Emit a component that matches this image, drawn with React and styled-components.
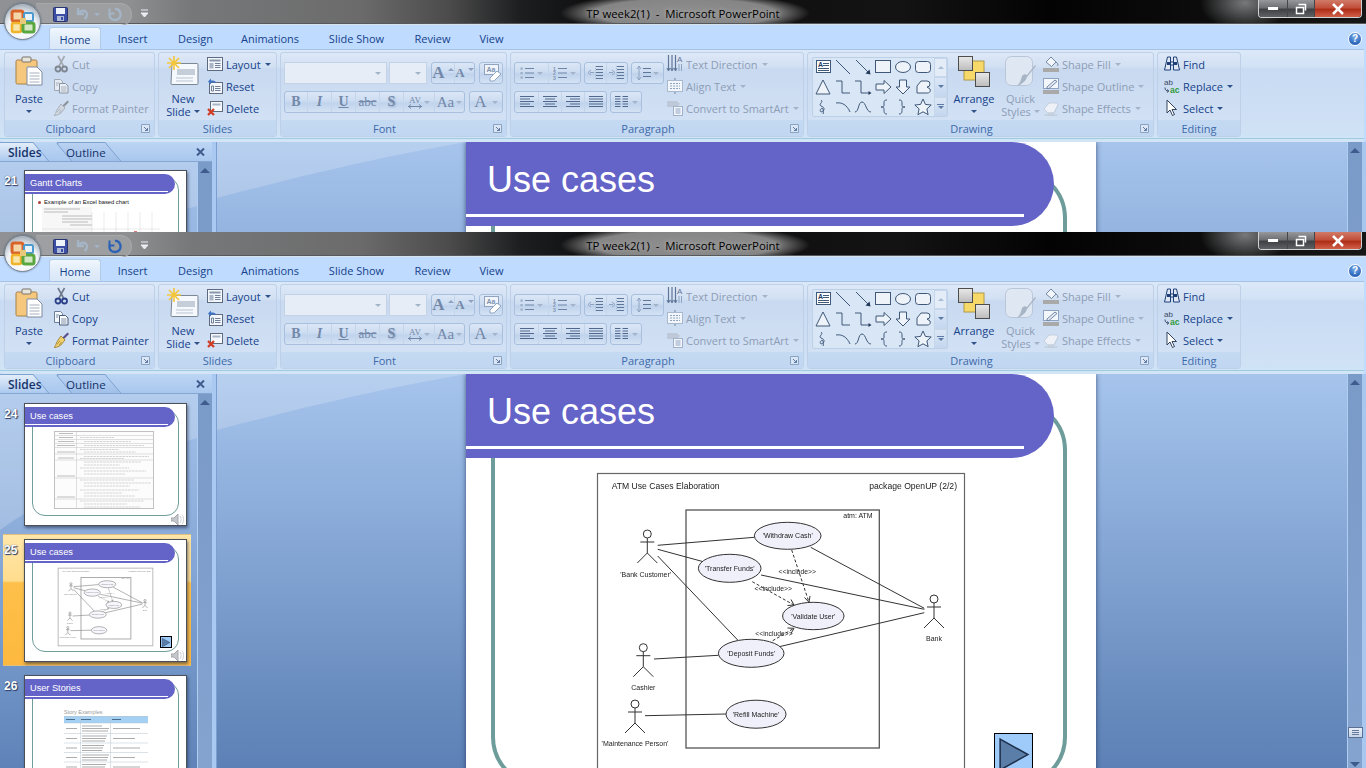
import React from 'react';
import styled, { createGlobalStyle } from 'styled-components';

const GlobalStyle = createGlobalStyle`
  * { box-sizing: border-box; }
  html, body {
    margin: 0;
    width: 1366px;
    height: 768px;
    overflow: hidden;
    background: #000;
    font-family: 'Open Sans', 'Liberation Sans', sans-serif;
    font-size: 11px;
  }
`;

const Screen = styled.div`
  display: flex;
  flex-direction: column;
  width: 1366px;
  height: 768px;
`;

const Clip = styled.div`
  height: ${(p) => p.$height}px;
  overflow: hidden;
  flex: none;
`;

const Win = styled.div`
  position: relative;
  display: flex;
  flex-direction: column;
  height: 536px;
  background: #bfdbff;
`;

// title bar
const TitleBar = styled.div`
  display: grid;
  grid-template-columns: 1fr auto 1fr;
  height: 25px;
  flex: none;
  border-bottom: 1px solid #d9e2ea;
  box-shadow: inset 0 -1px 0 #55585c;
  background:
    radial-gradient(ellipse 125px 20px at 685px 13px, #8f8f8f 0, #858585 72%, rgba(90, 90, 90, 0) 100%),
    radial-gradient(ellipse 45px 28px at 1245px 3px, #77797b 0, rgba(90, 90, 90, 0) 100%),
    linear-gradient(90deg, #8f9194 0, #8d8f91 130px, #77787a 190px, #6b6b6b 360px, #4b4b4b 450px, #1d1e20 520px, #0d0d0e 600px, #131313 900px, #030303 1050px, #161616 1366px);
`;

const QuickBar = styled.div`
  display: flex;
  align-items: center;
`;

const QuickPill = styled.div`
  display: flex;
  align-items: center;
  width: 96px;
  height: 23px;
  margin: 1px 0 0 36px;
  padding-left: 17px;
  border: 1px solid #a6a8aa;
  border-left: 0;
  border-radius: 0 12px 12px 0;
  background: rgba(255, 255, 255, 0.14);
`;

const QuickGap = styled.span`
  display: block;
  width: ${(p) => p.$w}px;
  flex: none;
`;

const TitleText = styled.div`
  padding: 0 10px;
  line-height: 27px;
  font-size: 11.4px;
  color: #000;
  white-space: pre;
  text-shadow: 0 0 5px rgba(255, 255, 255, 0.45);
`;

const WinControls = styled.div`
  display: flex;
  justify-self: end;
  height: 18px;
  margin-right: 4px;
  border: 1px solid #cfd3d6;
  border-top: 0;
  border-radius: 0 0 4px 4px;
  overflow: hidden;
`;

const WinButton = styled.div`
  display: flex;
  align-items: center;
  justify-content: center;
  width: ${(p) => p.$w}px;
  border-left: ${(p) => (p.$first ? 0 : '1px solid #44464a')};
  background: ${(p) => (p.$red
    ? 'linear-gradient(#cf7b68 0, #c2503a 45%, #ae2d17 55%, #d2604a 100%)'
    : 'linear-gradient(#96989c 0, #6d6f73 45%, #3f4145 55%, #5f6165 100%)')};
`;

const OfficeOrb = styled.div`
  position: absolute;
  left: 4px;
  top: 3px;
  width: 37px;
  height: 37px;
  display: flex;
  align-items: center;
  justify-content: center;
  border-radius: 50%;
  border: 1px solid #74808e;
  background: radial-gradient(circle at 50% 70%, #ffffff 0, #eef2f7 50%, #aab3bd 78%, #dfe4ea 100%);
  box-shadow: 0 0 2px rgba(60, 80, 100, 0.7);
  z-index: 3;
`;

// tab strip
const TabStrip = styled.div`
  display: flex;
  align-items: flex-end;
  height: 25px;
  flex: none;
  padding-left: 49px;
  background: #bfdbff;
`;

const RibbonTab = styled.div`
  width: ${(p) => p.$w}px;
  height: 23px;
  line-height: 24px;
  text-align: center;
  color: #15428b;
  font-size: 11px;
  ${(p) => p.$active && `
    background: linear-gradient(#f0f6fd 0, #e0ecfa 55%, #d9e7f8 100%);
    border: 1px solid #b2cbe6;
    border-bottom: 0;
    border-radius: 3px 3px 0 0;
  `}
`;

const HelpDot = styled.div`
  width: 14px;
  height: 14px;
  margin: 0 4px 4px auto;
  border-radius: 50%;
  border: 1px solid #fff;
  background: radial-gradient(circle at 50% 30%, #7fb0ea, #1f5cb4 80%);
  color: #fff;
  font: bold 10px/12px 'Liberation Sans', sans-serif;
  text-align: center;
`;

// ribbon
const Ribbon = styled.div`
  display: flex;
  gap: 3px;
  height: 93px;
  flex: none;
  padding: 2px 4px 0;
  margin-right: 2px;
  border-top: 1px solid #a6c3e5;
  margin-top: -1px;
  border-bottom: 3px solid #d1e5f7;
  box-shadow: inset 0 -1px 0 #9fcbe0;
  border-radius: 0 0 3px 3px;
  background: linear-gradient(#dbe8f8 0, #d3e3f6 18%, #c8dbf3 22%, #cfe0f5 80%, #cfe4f6 100%);
`;

const GroupBox = styled.div`
  display: flex;
  flex-direction: column;
  width: ${(p) => p.$w}px;
  height: 85px;
  flex: none;
  border: 1px solid #bdd0e8;
  border-radius: 3px;
  overflow: hidden;
  background: linear-gradient(#dde8f7 0, #d2e0f3 14px, #c8d9f0 16px, #d5e3f5 100%);
`;

const GroupBody = styled.div`
  display: flex;
  flex: 1;
  gap: ${(p) => p.$gap ?? 3}px;
  padding-left: ${(p) => p.$left ?? 3}px;
`;

const GroupFoot = styled.div`
  position: relative;
  height: 16px;
  flex: none;
  padding-right: ${(p) => (p.$launcher ? 18 : 0)}px;
  text-align: center;
  line-height: 17px;
  color: #3e6aaa;
  background: linear-gradient(#c4d9f2, #c1d7f1);
`;

const Launcher = styled.svg`
  position: absolute;
  right: 4px;
  top: 4px;
`;

const LargeBtn = styled.div`
  display: flex;
  flex-direction: column;
  align-items: center;
  width: ${(p) => p.$w}px;
  flex: none;
  color: ${(p) => (p.$off ? '#8d9db6' : '#15428b')};
  line-height: 13px;
  text-align: center;
`;

const LargeIconSlot = styled.div`
  display: flex;
  justify-content: center;
  height: 39px;
  padding-top: 3px;
  flex: none;
`;

const Caret = styled.span`
  display: inline-block;
  flex: none;
  width: 0;
  height: 0;
  border-left: 3px solid transparent;
  border-right: 3px solid transparent;
  border-top: 3px solid ${(p) => (p.$off ? '#a3b3ca' : '#30528a')};
  margin-left: ${(p) => p.$left ?? 1}px;
  vertical-align: middle;
`;

const CaretLine = styled.div`
  display: flex;
  justify-content: center;
  height: 13px;
  align-items: center;
`;

const SmallList = styled.div`
  display: flex;
  flex-direction: column;
  flex: none;
`;

const SmallRow = styled.div`
  display: flex;
  align-items: center;
  gap: 3px;
  height: 22px;
  white-space: nowrap;
  color: ${(p) => (p.$off ? '#8d9db6' : '#15428b')};
`;

const StackRows = styled.div`
  display: flex;
  flex-direction: column;
  gap: 7px;
  padding-top: 9px;
  flex: none;
`;

const Row = styled.div`
  display: flex;
  gap: ${(p) => p.$gap ?? 4}px;
`;

const Combo = styled.div`
  display: flex;
  align-items: center;
  justify-content: flex-end;
  width: ${(p) => p.$w}px;
  height: 22px;
  padding-right: 5px;
  border: 1px solid #c2d3e8;
  background: #e6edf6;
`;

const Seg = styled.div`
  display: flex;
  height: 22px;
  border: 1px solid #a8c0de;
  border-radius: 3px;
  overflow: hidden;
  background: linear-gradient(#dbe7f6 0, #cddcf1 45%, #bfd3ec 55%, #d4e2f4 100%);
`;

const SegBtn = styled.div`
  display: flex;
  align-items: center;
  justify-content: center;
  gap: 2px;
  width: ${(p) => p.$w}px;
  flex: none;
  border-left: ${(p) => (p.$first ? 0 : '1px solid #c3d5ea')};
  color: #7388a8;
  font: ${(p) => (p.$plain ? 'normal' : 'bold')} ${(p) => p.$size ?? 14}px 'Liberation Serif', serif;
  ${(p) => p.$italic && 'font-style: italic;'}
  ${(p) => p.$under && 'text-decoration: underline;'}
  ${(p) => p.$strike && 'text-decoration: line-through;'}
  ${(p) => p.$shadow && 'text-shadow: 1px 1px 2px #8ea3c1;'}
`;

const KerningStack = styled.span`
  display: flex;
  flex-direction: column;
  align-items: center;
  font: 9px/8px 'Liberation Serif', serif;
`;

const SuperCaret = styled.span`
  display: block;
  width: 0;
  height: 0;
  margin: -8px 0 0 1px;
  border-left: 3px solid transparent;
  border-right: 3px solid transparent;
  ${(p) => (p.$down ? 'border-top: 3px solid #8ea3c1;' : 'border-bottom: 3px solid #8ea3c1;')}
`;

const Gallery = styled.div`
  display: flex;
  width: 136px;
  height: 60px;
  margin: 4px 0 0 0;
  border: 1px solid #bcd0e8;
  border-radius: 2px;
  background: #d9e6f6;
  flex: none;
`;

const ShapeGrid = styled.div`
  display: grid;
  grid-template-columns: repeat(6, 20px);
  grid-auto-rows: 20px;
  margin-top: -1px;
`;

const GalleryScroll = styled.div`
  display: flex;
  flex-direction: column;
  width: 14px;
  margin-left: 1px;
`;

const GalleryBtn = styled.div`
  flex: 1;
  display: flex;
  flex-direction: column;
  align-items: center;
  justify-content: center;
  gap: 1px;
  border: 1px solid #c6d7ec;
  background: ${(p) => (p.$light ? '#e3ecf7' : 'linear-gradient(#dbe7f6, #c4d7ef)')};
`;

const GalleryMark = styled.span`
  display: block;
  width: 7px;
  height: 1px;
  background: #5d7ba6;
`;

const Tri = styled.span`
  display: block;
  width: 0;
  height: 0;
  border-left: 3px solid transparent;
  border-right: 3px solid transparent;
  ${(p) => (p.$up ? `border-bottom: 3px solid ${p.$c ?? '#5d7ba6'};` : `border-top: 3px solid ${p.$c ?? '#5d7ba6'};`)}
`;

const RibbonFill = styled.div`
  flex: 1;
`;

// work area
const Work = styled.div`
  display: flex;
  flex: 1;
  min-height: 0;
`;

const Panel = styled.div`
  display: flex;
  flex-direction: column;
  width: 212px;
  flex: none;
  background: linear-gradient(#a5c4ec 0, #93b3df 30%, #7c9fd0 60%, #5f83b8 100%);
`;

const PanelTabs = styled.div`
  position: relative;
  display: flex;
  height: 20px;
  flex: none;
  overflow: hidden;
  border-bottom: 1px solid #86a6d2;
  background: linear-gradient(#bcd5f4, #a9c7ee);
`;

const PaneTab = styled.div`
  position: relative;
  width: ${(p) => p.$w}px;
  margin-left: ${(p) => p.$left}px;
  padding-left: ${(p) => p.$pad}px;
  line-height: 21px;
  font-size: ${(p) => (p.$active ? 12 : 11.6)}px;
  font-weight: ${(p) => (p.$active ? 600 : 400)};
  color: #15326a;
  z-index: ${(p) => (p.$active ? 2 : 1)};
  &::before {
    content: '';
    position: absolute;
    inset: 0 8px -2px ${(p) => (p.$active ? -12 : 6)}px;
    transform: skewX(40deg);
    border: 1px solid #7ea1d0;
    border-radius: 3px 0 0 0;
    background: ${(p) => (p.$active
    ? 'linear-gradient(#e2edfa 0, #c7dbf5 50%, #a8c7ee 100%)'
    : 'linear-gradient(#b9d2f2 0, #9fbfe9 100%)')};
    z-index: -1;
  }
`;

const PaneClose = styled.svg`
  position: absolute;
  right: 7px;
  top: 6px;
`;

const PanelBody = styled.div`
  display: flex;
  flex: 1;
  min-height: 0;
  position: relative;
  overflow: hidden;
`;

const Swoosh = styled.div`
  position: absolute;
  inset: 0;
  background: rgba(255, 255, 255, 0.2);
  clip-path: path('${(p) => p.$d}');
  pointer-events: none;
`;

const ThumbList = styled.div`
  position: relative;
  flex: 1;
  display: flex;
  flex-direction: column;
  gap: 4px;
  padding: ${(p) => p.$top}px 0 0 3px;
  min-width: 0;
`;

const ThumbRow = styled.div`
  display: flex;
  width: 188px;
  height: 132px;
  flex: none;
  padding-top: ${(p) => (p.$active ? 4 : 5)}px;
  ${(p) => p.$active && `
    border: 1px solid #e3bf7e;
    border-width: 1px 0 1px 0;
    background: linear-gradient(#ffe6a9 0, #ffdd8e 35%, #fec04a 37%, #fdb93f 100%);
  `}
`;

const ThumbNum = styled.div`
  width: 21px;
  flex: none;
  padding: 4px 0 0 1px;
  font: bold 12px/14px 'Liberation Sans', sans-serif;
  color: #fff;
  text-shadow: 1px 1px 1px #2a3d66, 0 0 1px #2a3d66;
`;

const Thumb = styled.div`
  position: relative;
  width: 163px;
  height: 123px;
  flex: none;
  padding-top: 3px;
  border: 1px solid #4b4f58;
  background: #fff;
  box-shadow: 1px 2px 3px rgba(30, 40, 70, 0.6);
`;

const ThumbFrame = styled.div`
  position: absolute;
  left: 7px;
  top: 6px;
  width: 147px;
  height: 106px;
  border: 1px solid #6e9c9a;
  border-radius: 13px;
`;

const ThumbHeader = styled.div`
  position: relative;
  width: 150px;
  height: 20px;
  padding-left: 5px;
  border-radius: 0 10px 10px 0;
  background: #6464c8;
  font: 9.2px/19px 'Liberation Sans', sans-serif;
  color: #fff;
  &::after {
    content: '';
    position: absolute;
    left: 0;
    right: 7px;
    top: 17px;
    height: 1px;
    background: #fff;
  }
`;

const ThumbContent = styled.div`
  position: relative;
  padding: ${(p) => p.$top}px 0 0 ${(p) => p.$left}px;
`;

const ThumbHeading = styled.div`
  display: flex;
  align-items: center;
  gap: 3px;
  font: ${(p) => p.$size ?? 5.5}px/7px 'Liberation Sans', sans-serif;
  color: ${(p) => p.$c ?? '#9a9a9a'};
  white-space: nowrap;
`;

const BulletDot = styled.span`
  display: block;
  width: 3px;
  height: 3px;
  border-radius: 50%;
  background: #b04040;
`;

const SheetIndent = styled.div`
  margin: 1px 0 0 4px;
`;

const Speaker = styled.svg`
  position: absolute;
  left: 146px;
  top: 109px;
`;

const VScroll = styled.div`
  display: flex;
  flex-direction: column;
  align-items: center;
  width: ${(p) => p.$w}px;
  flex: none;
  padding: 6px 0 1px;
  border-left: 1px solid #b0cdf2;
  background: linear-gradient(#7a9ac7, #85a3cf);
  position: relative;
`;

const ScrollArrow = styled.span`
  display: block;
  width: 0;
  height: 0;
  border-left: 5px solid transparent;
  border-right: 5px solid transparent;
  ${(p) => (p.$up
    ? 'border-bottom: 5px solid #3f5a8c;'
    : 'border-top: 5px solid #3f5a8c; margin-top: 24px;')}
`;

const ScrollThumb = styled.div`
  display: flex;
  flex-direction: column;
  justify-content: center;
  gap: 1px;
  width: 15px;
  height: 11px;
  margin-top: auto;
  padding: 0 3px;
  border: 1px solid #5a6f92;
  background: linear-gradient(#e9f0f9, #c5d4e8);
`;

const ThumbGrip = styled.span`
  display: block;
  height: 1px;
  background: #67799a;
`;

const Splitter = styled.div`
  width: 5px;
  flex: none;
  border-right: 1px solid #7c9fd0;
  background: #a9c9f2;
`;

const Edge = styled.div`
  width: 4px;
  flex: none;
  background: #a7c7ef;
`;

const Stage = styled.div`
  position: relative;
  display: flex;
  justify-content: center;
  flex: 1;
  overflow: hidden;
  padding-right: 2px;
  background: linear-gradient(#a6c4ec 0, #93b3df 25%, #7d9fcf 55%, #6a8dbf 80%, #5d81b6 100%);
`;

const Slide = styled.div`
  position: relative;
  width: 630px;
  height: 472px;
  flex: none;
  padding-top: 0;
  background: #fff;
  box-shadow: 0 0 5px rgba(30, 50, 90, 0.75);
`;

const SlideFrame = styled.div`
  position: absolute;
  left: 25px;
  top: 26px;
  width: 576px;
  height: 387px;
  border: 4px solid #6e9c9a;
  border-radius: 50px;
`;

const SlideHeader = styled.div`
  position: relative;
  width: 588px;
  height: 84px;
  padding-left: 21px;
  border-radius: 0 42px 42px 0;
  background: #6464c8;
  color: #fff;
  font: 36px/76px 'Liberation Sans', sans-serif;
  &::after {
    content: '';
    position: absolute;
    left: 0;
    top: 72px;
    width: 558px;
    height: 3px;
    background: #fff;
  }
`;

const Figure = styled.div`
  position: relative;
  margin: 15px 0 0 131px;
  width: 368px;
`;

const ActionBtn = styled.div`
  position: absolute;
  left: ${(p) => p.$x}px;
  top: ${(p) => p.$y}px;
  width: ${(p) => p.$s}px;
  height: ${(p) => p.$s}px;
  border: ${(p) => (p.$s > 20 ? 1.5 : 1)}px solid #000;
  background: #9fcbfb;
`;

const Sv = styled.svg`
  display: block;
  flex: none;
  overflow: visible;
  ${(p) => p.$off && 'filter: grayscale(1) opacity(0.55);'}
  ${(p) => p.$soft && `filter: blur(${p.$soft}px);`}
  ${(p) => p.$fade && `opacity: ${p.$fade};`}
`;

// icons
const I = ({ w = 16, h = 16, off, children }) => (
  <Sv width={w} height={h} viewBox={`0 0 ${w} ${h}`} $off={off}>{children}</Sv>
);

const OfficeLogo = () => (
  <svg width="28" height="28" viewBox="0 0 28 28">
    <rect x="3" y="3" width="11" height="10" rx="2" fill="#f4d6a8" stroke="#d9642a" strokeWidth="3" />
    <rect x="15" y="5" width="9" height="8" rx="1.5" fill="#eaf2f9" stroke="#4a9ad1" strokeWidth="2" />
    <rect x="3" y="15" width="9" height="9" rx="1.5" fill="#f7e6a8" stroke="#f0b32a" strokeWidth="2.5" />
    <rect x="14" y="15" width="11" height="9" rx="2" fill="#d5e8c4" stroke="#5aa63f" strokeWidth="3" />
    <rect x="11" y="10" width="6" height="6" fill="#e6ca7a" />
  </svg>
);

const SaveIcon = () => (
  <I w={15} h={15}>
    <rect x="0.5" y="0.5" width="14" height="14" rx="1" fill="#3c4fa5" stroke="#2a3470" />
    <rect x="3" y="1" width="9" height="6" fill="#eef2fa" />
    <rect x="4" y="9" width="7" height="5" fill="#aeb9d8" />
    <rect x="8" y="10" width="2" height="3" fill="#3c4fa5" />
  </I>
);

const UndoIcon = () => (
  <I w={13} h={14}>
    <path d="M2 1v6h6M2.5 6.5C5 3 9 3 10.5 5.5c1.2 2.2.2 5-2 6.5" fill="none" stroke="#a6b8cd" strokeWidth="2.4" opacity="0.85" />
  </I>
);

const RedoIcon = ({ on }) => (
  <I w={15} h={14}>
    <path d="M2.500 1.500v5h5" fill="none" stroke={on ? '#2c62b4' : '#a6b8cd'} strokeWidth="2" opacity={on ? 1 : 0.85} />
    <path d="M3 6c-1.500 4 1 7 5 7s6-3 5.500-6.500S10 1.500 8 2" fill="none" stroke={on ? '#2c62b4' : '#a6b8cd'} strokeWidth="2.400" opacity={on ? 1 : 0.85} />
  </I>
);

const PasteIcon = () => (
  <I w={28} h={30}>
    <rect x="1" y="4" width="21" height="24" rx="1.5" fill="#f6c87e" stroke="#a58048" />
    <rect x="7" y="1" width="9" height="5" rx="1" fill="#e7e4dc" stroke="#79756c" />
    <path d="M12 11h10l5 5v13H12z" fill="#fff" stroke="#7e8ba0" />
    <path d="M14.5 17h10M14.5 20h10M14.5 23h10M14.5 26h10" stroke="#a7b0bf" />
  </I>
);

const CutIcon = ({ off }) => (
  <I off={off}>
    <path d="M5 0l5.5 10M11.5 0L6 10" stroke="#6c7a8b" strokeWidth="1.6" fill="none" />
    <circle cx="5" cy="13" r="2.5" fill="none" stroke="#2a3f88" strokeWidth="1.8" />
    <circle cx="11.5" cy="13" r="2.5" fill="none" stroke="#2a3f88" strokeWidth="1.8" />
  </I>
);

const CopyIcon = ({ off }) => (
  <I off={off}>
    <path d="M1.5 1.5h6l2 2v9h-8z" fill="#f5f8fc" stroke="#6e7f9a" />
    <path d="M6.5 5.5h6l2.5 2.5v7H6.500z" fill="#fff" stroke="#46597b" />
    <path d="M8 9h5.500M8 11h5.500M8 13h5.500M3 5h3M3 7h2" stroke="#7d8ea8" />
  </I>
);

const PainterIcon = ({ off }) => (
  <I w={16} h={16} off={off}>
    <path d="M9.5 5.500l5-5 1.500 1.500-5 5z" fill="#5b4d8e" />
    <path d="M8 4l4 4-2.500 3C8 14 4 15.500 1 15.500c1.500-1 2-3 2.500-5z" fill="#f0cf6c" stroke="#a28a3f" />
    <path d="M4 12l3-3M6 13l2.500-3" stroke="#b7973f" />
  </I>
);

const NewSlideIcon = () => (
  <I w={32} h={30}>
    <path d="M5 7.500h25a1 1 0 0 1 1 1v19a1 1 0 0 1-1 1H5a1 1 0 0 1-1-1z" fill="#f5f8fc" stroke="#7c8794" />
    <rect x="10" y="13" width="18" height="6" fill="#c5cdd8" />
    <path d="M9 22h17M9 25h17" stroke="#b9c3d0" />
    <path d="M7 0v14M0 7h14M2 2l10 10M12 2L2 12" stroke="#f5c63a" strokeWidth="1.6" />
  </I>
);

const LayoutIcon = () => (
  <I>
    <rect x="0.500" y="1.500" width="15" height="13" fill="#f3f6fb" stroke="#5d6a80" />
    <rect x="2.500" y="3.500" width="11" height="2" fill="#8a98ae" />
    <rect x="2.500" y="7" width="4" height="5.500" fill="#a9b5c7" />
    <path d="M8 7.500h5.500M8 9.500h5.500M8 11.500h5.500" stroke="#6f7f98" />
  </I>
);

const ResetIcon = () => (
  <I>
    <rect x="2.500" y="4.500" width="13" height="11" fill="#f3f6fb" stroke="#5d6a80" />
    <path d="M8 8.500h5.500M8 10.500h5.500M8 12.500h5.500M4.500 8h2v5h-2z" stroke="#6f7f98" fill="none" />
    <path d="M1 3.500L4 .5v2c3 0 4.500 .5 5.500 2.500C8 4.500 6 4.500 4 4.500v2z" fill="#3f73c4" />
  </I>
);

const DeleteIcon = () => (
  <I>
    <rect x="3.500" y="1.500" width="12" height="10" fill="#f5f8fc" stroke="#5d6a80" />
    <rect x="5.500" y="3.500" width="8" height="2" fill="#a9b5c7" />
    <path d="M1 9l6 6M7 9l-6 6" stroke="#d13a23" strokeWidth="2.200" />
  </I>
);

const GrowClear = () => (
  <Sv width="22" height="18" viewBox="0 0 22 18">
    <rect x="4.500" y="0.500" width="14" height="10" fill="#f1f5fb" stroke="#8fa3bf" />
    <text x="6.500" y="8" fontFamily="Liberation Sans, sans-serif" fontSize="7" fill="#7f93b0">Aa</text>
    <path d="M10 14l7-7 4 3-7 7h-4z" fill="#fff" stroke="#8fa3bf" />
  </Sv>
);

const MiniBullets = ({ numbered }) => (
  <I w={14} h={14}>
    {[2.5, 7, 11.5].map((y) => (
      <g key={y}>
        {numbered
          ? <text x="0" y={y + 2} fontSize="5" fontFamily="Liberation Sans, sans-serif" fill="#7f93b0">{y === 2.5 ? 1 : y === 7 ? 2 : 3}</text>
          : <rect x="0.500" y={y - 1} width="2.200" height="2.200" fill="#9aacc6" />}
        <path d={`M5 ${y}h9`} stroke="#6f85a6" />
      </g>
    ))}
  </I>
);

const IndentIcon = ({ right }) => (
  <I w={16} h={14}>
    <path d="M8 .500h7M8 3.500h7M8 6.500h7M8 9.500h7M8 12.500h7" stroke="#5e7698" />
    <path d={right ? 'M0 6.500h4M3 4l3 2.500L3 9' : 'M6 6.500H2M3 4L0 6.500 3 9'} stroke="#8ea3c1" fill="none" />
    <path d="M7.500 0v14" stroke="#a9bad3" strokeDasharray="1 1" />
  </I>
);

const LineSpacingIcon = () => (
  <I w={15} h={14}>
    <path d="M3 0v14M1 3l2-3 2 3M1 11l2 3 2-3" stroke="#8ea3c1" fill="none" />
    <path d="M7 2.500h8M7 6.500h8M7 10.500h8" stroke="#5e7698" />
  </I>
);

const AlignIcon = ({ mode }) => {
  const rows = [14, 10, 14, 10, 14].map((w, i) => {
    const len = mode === 'justify' ? 14 : w;
    const x = mode === 'center' ? (14 - len) / 2 : mode === 'right' ? 14 - len : 0;
    return <path key={i} d={`M${x} ${1.5 + i * 2.5}h${len}`} stroke="#50688c" />;
  });
  return <I w={14} h={14}>{rows}</I>;
};

const ColumnsIcon = () => (
  <I w={13} h={14}>
    {[1.500, 4, 6.500, 9, 11.500].map((y) => (
      <path key={y} d={`M0 ${y}h5.500M7.500 ${y}h5.500`} stroke="#50688c" />
    ))}
  </I>
);

const TextDirectionIcon = () => (
  <I w={16} h={18}>
    <path d="M1.500 0v15M5 0v15M8.500 0v15" stroke="#5f7697" strokeWidth="1.200" />
    <path d="M0 13l1.500 3 1.500-3M3.500 13L5 16l1.500-3M7 13l1.500 3 1.500-3" stroke="#5f7697" fill="none" />
    <text x="10" y="7" fontSize="8" fontFamily="Liberation Sans, sans-serif" fill="#5f7697">A</text>
    <path d="M12 9v7M14.500 9v7" stroke="#8ea3c1" />
  </I>
);

const AlignTextIcon = () => (
  <I>
    <rect x="0.500" y="2.500" width="15" height="11" fill="#f3f6fb" stroke="#a8b8cf" />
    <path d="M3 5.500h10M3 8h10M3 10.500h10" stroke="#8ea3c1" strokeDasharray="2 1" />
    <path d="M8 0v2M8 14v2" stroke="#6f85a6" />
  </I>
);

const SmartArtIcon = () => (
  <I>
    <path d="M0 1h10l3 3-3 3H0z" fill="#bdc8d8" />
    <rect x="6.500" y="6.500" width="9" height="9" fill="#f3f6fb" stroke="#a0b0c6" />
    <path d="M8.500 9h5M8.500 11h5M8.500 13h5" stroke="#8ea3c1" />
  </I>
);

const ShapeFillIcon = () => (
  <I>
    <path d="M3 6l5-5 5 5-4.500 4.500z" fill="#f3f6fb" stroke="#7488a6" />
    <path d="M13 6c1.500 1 2.500 2.500 1.500 4" stroke="#7488a6" fill="none" />
    <rect x="0" y="12" width="16" height="4" fill="#a9a9a9" />
  </I>
);

const ShapeOutlineIcon = () => (
  <I>
    <rect x="0.500" y="0.500" width="15" height="10" fill="#f3f6fb" stroke="#8ea3c1" />
    <path d="M4 9l8-7 2 1.500-8 7H4z" fill="#e4eaf3" stroke="#7488a6" />
    <rect x="0" y="12" width="16" height="4" fill="#a9a9a9" />
  </I>
);

const ShapeEffectsIcon = () => (
  <I>
    <path d="M1 9l5-6h8l1 2-4 8H5z" fill="#eef2f8" stroke="#c4cedc" />
    <path d="M1 9l4 4h6l4-8" fill="none" stroke="#c4cedc" />
    <ellipse cx="8" cy="15" rx="7" ry="1" fill="#c2cede" />
  </I>
);

const FindIcon = () => (
  <I>
    <path d="M3.500 1h3v5h3V1h3l3 13h-6V9h-3v5H.5z" fill="#dfe7f2" stroke="#1f3f78" />
    <rect x="3" y="6" width="4" height="3" fill="#1f3f78" />
    <rect x="9" y="6" width="4" height="3" fill="#1f3f78" />
  </I>
);

const ReplaceIcon = () => (
  <Sv width="16" height="16" viewBox="0 0 16 16">
    <text x="0" y="7" fontSize="8" fontFamily="Liberation Sans, sans-serif" fill="#3a4a66">ab</text>
    <text x="6" y="15" fontSize="8.500" fontWeight="bold" fontFamily="Liberation Sans, sans-serif" fill="#2f9a3c">ac</text>
    <path d="M1 9.500c0 3 1.500 3.500 3.500 3.500M3 11.500L4.800 13 3 14.500" stroke="#3a4a66" fill="none" />
  </Sv>
);

const SelectIcon = () => (
  <I>
    <path d="M3 0v13l3-3 2.500 5.500 2-1L8 9.500h4.500z" fill="#fff" stroke="#33445f" />
  </I>
);

const ArrangeIcon = () => (
  <I w={32} h={31}>
    <rect x="6" y="5" width="20" height="19" fill="#f6d968" stroke="#b09a46" />
    <rect x="0.500" y="0.500" width="14" height="14" fill="url(#arrg)" stroke="#4d4d4d" />
    <rect x="17.500" y="16.500" width="14" height="14" fill="url(#arrg)" stroke="#4d4d4d" />
    <defs>
      <linearGradient id="arrg" x1="0" y1="0" x2="0" y2="1">
        <stop offset="0" stopColor="#e8e8e8" />
        <stop offset="1" stopColor="#bcbcbc" />
      </linearGradient>
    </defs>
  </I>
);

const QuickStylesIcon = () => (
  <I w={32} h={31}>
    <rect x="0.500" y="0.500" width="27" height="29" rx="6" fill="#dfe7f2" stroke="#b9c6d8" />
    <path d="M31 10l-9 11c-1 3-4 7-10 9 3-3 4-6 5-10 2-2 3-2 5-1l8-10z" fill="#a8b5c6" />
  </I>
);

// shape gallery cells, 20x20
const ST = { stroke: '#3f5878', fill: 'none' };
const SHAPE_CELLS = [
  <g key="tb"><rect x="3.500" y="3.500" width="14" height="12" fill="#fff" stroke="#3f5878" /><text x="5" y="10" fontSize="7" fontWeight="bold" fontFamily="Liberation Sans, sans-serif" fill="#233a5c">A</text><path d="M10 6.500h6M10 8.500h6M5 11.500h11M5 13.500h11" stroke="#3f5878" /></g>,
  <path key="ln" d="M3 3l14 14" {...ST} />,
  <g key="ar"><path d="M3 3l13 13" {...ST} /><path d="M17.500 17.500l-1-5-4 4z" fill="#233a5c" /></g>,
  <rect key="rc" x="2.500" y="3.500" width="15" height="12" fill="#eef3fa" stroke="#3f5878" />,
  <ellipse key="el" cx="10" cy="10" rx="7.500" ry="5.500" fill="#eef3fa" stroke="#3f5878" />,
  <rect key="rr" x="2.500" y="4.500" width="15" height="11" rx="3" fill="#eef3fa" stroke="#3f5878" />,
  <path key="tr" d="M10 3l7 14H3z" fill="#eef3fa" stroke="#3f5878" />,
  <path key="el1" d="M3 4h6v12h8" {...ST} />,
  <g key="el2"><path d="M2 4h6v12h8" {...ST} /><path d="M18.500 16l-3-2v4z" fill="#233a5c" /></g>,
  <path key="ra" d="M3 7h8V3.500L18 10l-7 6.500V13H3z" fill="#eef3fa" stroke="#3f5878" />,
  <path key="da" d="M6.500 3h7v7H17l-7 7-7-7h3.500z" fill="#eef3fa" stroke="#3f5878" />,
  <path key="fc" d="M4 16V9l4-5h6a3 3 0 0 1 0 6l3 2c1 3-1 4-3 4z" fill="#eef3fa" stroke="#3f5878" />,
  <path key="sc" d="M8 3c3 2-3 4 0 6 3 1 4 3 2 5s-4 0-2-2c2-3 3 3 2 5" {...ST} />,
  <path key="cv" d="M3 6c6-1 11 2 14 9" {...ST} />,
  <path key="wv" d="M2 15c4 0 3-10 7-10s4 10 9 10" {...ST} />,
  <path key="lb" d="M14 3c-3 0-3 1-3 4s0 3-3 3c3 0 3 1 3 3s0 4 3 4" {...ST} />,
  <path key="rb" d="M6 3c3 0 3 1 3 4s0 3 3 3c-3 0-3 1-3 3s0 4-3 4" {...ST} />,
  <path key="st" d="M10 2l2.400 5.400 5.800 .6-4.300 3.900 1.200 5.800-5.100-2.900-5.100 2.900 1.200-5.800L1.800 8l5.800-.6z" fill="#eef3fa" stroke="#3f5878" />,
];

// the ATM diagram on the slide, also used at thumbnail size
const Actor = ({ x, y, label, labelX, labelY, line }) => (
  <g>
    <circle cx={x} cy={y} r="4" fill="#fff" stroke="#333" strokeWidth={line} />
    <path d={`M${x} ${y + 4}v15M${x - 7} ${y + 8}h14M${x - 10} ${y + 29}L${x} ${y + 19}l10 10`} fill="none" stroke="#333" strokeWidth={line} />
    <text x={labelX ?? x} y={labelY} textAnchor="middle" fontSize="7">{label}</text>
  </g>
);

const USE_CASES = [
  [190.7, 62.8, 33.3, 13.5, "'Withdraw Cash'"],
  [132.7, 95.3, 31.3, 14, "'Transfer Funds'"],
  [216.3, 143, 30.7, 13.7, "'Validate User'"],
  [154.2, 180.3, 32.800, 14, "'Deposit Funds'"],
  [159, 241.2, 30, 14, "'Refill Machine'"],
];

const ASSOCIATIONS = [
  'M60.7 72.300L157.300 64.300',
  'M60.7 76.300L106.300 88.700',
  'M60.7 83L140.700 167',
  'M57 186L121.300 182.300',
  'M48 242.700L129 241',
  'M213.700 74.300L327.300 135.300',
  'M164 102L327.300 136.300',
  'M182.300 173.700L327.300 139.700',
];

const INCLUDES = [
  ['M194.700 77L212 129.300', 'M207.500 124.500L212 129.300 213 123'],
  ['M155.300 108.700L197 132', 'M190.500 132.500L197 132 194 126.500'],
  ['M175.700 167.700L197 155.300', 'M190.500 155L197 155.300 194 160.500'],
];

const UmlDiagram = ({ width, fade, soft, line = 1 }) => (
  <Sv width={width} height={width * 302 / 368} viewBox="0 0 368 302" fontFamily="Liberation Sans, Arial, sans-serif" fill="#222" $fade={fade} $soft={soft}>
    <rect x="0.500" y="0.500" width="367" height="301" fill="#fff" stroke="#666" strokeWidth={line * 1.2} />
    <text x="14.700" y="16" fontSize="8.600">ATM Use Cases Elaboration</text>
    <text x="360" y="16" fontSize="8.600" textAnchor="end">package OpenUP (2/2)</text>
    <rect x="89" y="37" width="193.300" height="238" fill="none" stroke="#555" strokeWidth={line * 1.3} />
    <text x="275.700" y="44.500" fontSize="7" textAnchor="end">atm: ATM</text>
    {ASSOCIATIONS.map((d) => <path key={d} d={d} stroke="#333" strokeWidth={line} fill="none" />)}
    {INCLUDES.map(([path, head]) => (
      <g key={path}>
        <path d={path} stroke="#333" strokeWidth={line} strokeDasharray="3 2" fill="none" />
        <path d={head} stroke="#333" strokeWidth={line} fill="none" />
      </g>
    ))}
    {USE_CASES.map(([cx, cy, rx, ry, label]) => (
      <g key={label}>
        <ellipse cx={cx} cy={cy} rx={rx} ry={ry} fill="#f0f0fb" stroke="#333" strokeWidth={line} />
        <text x={cx} y={cy + 2.500} fontSize="7" textAnchor="middle">{label}</text>
      </g>
    ))}
    <text x="200.300" y="100.500" fontSize="6.800" textAnchor="middle">&lt;&lt;include&gt;&gt;</text>
    <text x="176.300" y="118" fontSize="6.800" textAnchor="middle">&lt;&lt;include&gt;&gt;</text>
    <text x="177" y="163" fontSize="6.800" textAnchor="middle">&lt;&lt;include&gt;&gt;</text>
    <Actor line={line} x={50.300} y={61} label="'Bank Customer'" labelX={48.700} labelY={104} />
    <Actor line={line} x={46.300} y={174.700} label="Cashier" labelY={217} />
    <Actor line={line} x={38} y={231} label="'Maintenance Person'" labelY={273} />
    <Actor line={line} x={337} y={126} label="Bank" labelY={168} />
  </Sv>
);

const PlayGlyph = ({ s }) => (
  <Sv width={s - 2} height={s - 2} viewBox="0 0 36 36">
    <path d="M5 5l27 15L5 35z" fill="#5a7ea8" stroke="#1d2f4a" strokeWidth="1.500" />
  </Sv>
);

const SpeakerIcon = () => (
  <Speaker width="13" height="13" viewBox="0 0 13 13">
    <path d="M0 5h3l4-4v11L3 8H0z" fill="#c4c7cc" stroke="#a5a8ad" />
    <path d="M9 3c1.500 2 1.500 5 0 7M11 1.500c2 3 2 7 0 10" stroke="#c9ccd1" fill="none" />
  </Speaker>
);

// thumbnails
const GreyTable = () => (
  <Sv width="100" height="78" viewBox="0 0 100 78" $fade={0.6}>
    <rect x="0.500" y="0.500" width="99" height="77" fill="#fbfbfb" stroke="#999" />
    <path d="M22.500 0v78M0 4.500h100M0 8.500h100M0 12.500h100M0 16.500h100M0 23h100M0 29h100M0 47h100M0 68h100" stroke="#aaa" strokeWidth="0.600" />
    <path d="M5 2.500h14M5 6.500h14M4 10.500h16M3 14.500h18M3 21h18M4 27h16M3 45h18M3 66h18" stroke="#777" strokeWidth="0.800" />
    {[6.500, 10.500, 14.500, 18.500, 21, 25.500, 27.500, 31, 34, 37, 40, 43, 49, 52, 55, 59, 62, 65, 70, 73, 76].map((y, i) => (
      <path key={y} d={`M${i % 3 === 0 ? 26 : 30} ${y}h${34 + (i * 13) % 34}`} stroke="#8b8b8b" strokeWidth="0.600" strokeDasharray="2.500 0.700" />
    ))}
  </Sv>
);

const StoryTable = () => (
  <Sv width="84" height="60" viewBox="0 0 84 60">
    <rect x="0" y="0" width="84" height="7" fill="#a4d0f3" />
    <path d="M2 3.500h9M17 3.500h10M48 3.500h9" stroke="#4a6a8a" strokeWidth="1" />
    <path d="M0 .5h84M0 7h84M0 17.500h84M0 27h84M0 36.500h84M0 46h84M0 55.500h84M16.500 0v60M46.500 0v60" stroke="#b6c4ce" strokeWidth="0.500" />
    {[10, 12.500, 15, 20, 22.500, 25, 29.500, 32, 34.500, 39, 41.500, 44, 48.500, 51, 53.500, 58].map((y, i) => (
      <path key={y} d={`M18 ${y}h${20 + (i * 7) % 8}${i % 3 === 1 ? `M49 ${y}h${22 + (i * 5) % 10}` : ''}${i % 3 === 1 ? `M2 ${y}h11` : ''}`} stroke="#888" strokeWidth="0.700" />
    ))}
  </Sv>
);

const GanttSheet = () => (
  <Sv width="118" height="30" viewBox="0 0 118 30" $fade={0.7}>
    <rect x="0" y="0" width="50" height="30" fill="#f4f4f4" />
    <path d="M2 2h36M2 5h24M20 9h30M20 12h30M20 15h26M28 18h22" stroke="#8a8a8a" strokeWidth="0.800" />
    <path d="M0 22h118M0 26h118M50 5v25M62 5v25M74 5v25M86 5v25M98 5v25M110 5v25" stroke="#cfcfcf" strokeWidth="0.600" />
    <rect x="92" y="24" width="3" height="3" fill="#d83a3a" />
  </Sv>
);

const THUMBS = {
  top: [
    {
      n: 21,
      title: 'Gantt Charts',
      left: 13,
      top: 5,
      content: (
        <>
          <ThumbHeading $c="#111" $size={5.800}><BulletDot />Example of an Excel based chart</ThumbHeading>
          <SheetIndent><GanttSheet /></SheetIndent>
        </>
      ),
    },
  ],
  bottom: [
    { n: 24, title: 'Use cases', left: 29, top: 4, content: <GreyTable />, sound: true },
    {
      n: 25,
      title: 'Use cases',
      left: 33,
      top: 5,
      active: true,
      content: <UmlDiagram width={95} fade={0.55} line={2.600} />,
      sound: true,
      action: true,
    },
    {
      n: 26,
      title: 'User Stories',
      left: 39,
      top: 10,
      content: (
        <>
          <ThumbHeading>Story Examples</ThumbHeading>
          <StoryTable />
        </>
      ),
    },
  ],
};

const Group = ({ w, title, launcher, left, gap, children }) => (
  <GroupBox $w={w}>
    <GroupBody $left={left} $gap={gap}>{children}</GroupBody>
    <GroupFoot $launcher={launcher}>
      {title}
      {launcher && (
        <Launcher width="9" height="9" viewBox="0 0 9 9">
          <path d="M.5 8.500v-8h8v8z" fill="#dbe6f5" stroke="#8aa2c4" />
          <path d="M3 3l3.500 3.500M6.500 4v2.500H4" stroke="#5d7ba6" fill="none" />
        </Launcher>
      )}
    </GroupFoot>
  </GroupBox>
);

const SmallItem = ({ icon, label, off, caret }) => (
  <SmallRow $off={off}>
    {icon}
    <span>{label}</span>
    {caret && <Caret $off={off} />}
  </SmallRow>
);

const TABS = [
  ['Home', 52], ['Insert', 63], ['Design', 63], ['Animations', 86],
  ['Slide Show', 87], ['Review', 65], ['View', 53],
];

const PowerPointWindow = ({ height, clipboardOn, redoOn, thumbs, listTop, children }) => (
  <Clip $height={height}>
    <Win>
      <TitleBar>
        <QuickBar>
          <QuickPill>
            <SaveIcon />
            <QuickGap $w={8} />
            <UndoIcon />
            <Caret $off $left={5} />
            <QuickGap $w={7} />
            <RedoIcon on={redoOn} />
          </QuickPill>
          <QuickGap $w={8} />
          <I w={9} h={9}>
            <path d="M1 1h7M1 4h7l-3.500 4z" stroke="#e9edf2" fill="#e9edf2" />
          </I>
        </QuickBar>
        <TitleText>TP week2(1)  -  Microsoft PowerPoint</TitleText>
        <WinControls>
          <WinButton $w={28} $first>
            <svg width="12" height="5"><rect width="10" height="3" x="1" y="1" fill="#fff" /></svg>
          </WinButton>
          <WinButton $w={27}>
            <svg width="12" height="12" viewBox="0 0 12 12"><path d="M3.500 1.500h7v6M1.500 4.500h7v6h-7z" fill="none" stroke="#fff" strokeWidth="1.500" /></svg>
          </WinButton>
          <WinButton $w={47} $red>
            <svg width="14" height="12" viewBox="0 0 14 12"><path d="M2 1l10 10M12 1L2 11" stroke="#fff" strokeWidth="2.500" /></svg>
          </WinButton>
        </WinControls>
      </TitleBar>

      <OfficeOrb><OfficeLogo /></OfficeOrb>

      <TabStrip>
        {TABS.map(([label, w], i) => <RibbonTab key={label} $w={w} $active={i === 0}>{label}</RibbonTab>)}
        <HelpDot>?</HelpDot>
      </TabStrip>

      <Ribbon>
        <Group w={151} title="Clipboard" launcher>
          <LargeBtn $w={42}>
            <LargeIconSlot><PasteIcon /></LargeIconSlot>
            Paste
            <CaretLine><Caret $left={0} /></CaretLine>
          </LargeBtn>
          <SmallList>
            <SmallItem icon={<CutIcon off={!clipboardOn} />} label="Cut" off={!clipboardOn} />
            <SmallItem icon={<CopyIcon off={!clipboardOn} />} label="Copy" off={!clipboardOn} />
            <SmallItem icon={<PainterIcon off={!clipboardOn} />} label="Format Painter" off={!clipboardOn} />
          </SmallList>
        </Group>

        <Group w={119} title="Slides">
          <LargeBtn $w={42}>
            <LargeIconSlot><NewSlideIcon /></LargeIconSlot>
            New
            <CaretLine>Slide<Caret $left={3} /></CaretLine>
          </LargeBtn>
          <SmallList>
            <SmallItem icon={<LayoutIcon />} label="Layout" caret />
            <SmallItem icon={<ResetIcon />} label="Reset" />
            <SmallItem icon={<DeleteIcon />} label="Delete" />
          </SmallList>
        </Group>

        <Group w={227} title="Font" launcher>
          <StackRows>
            <Row>
              <Row $gap={2}>
                <Combo $w={103}><Caret $off $left={0} /></Combo>
                <Combo $w={38}><Caret $off $left={0} /></Combo>
              </Row>
              <Seg>
                <SegBtn $w={22} $first $size={17}>A<SuperCaret /></SegBtn>
                <SegBtn $w={20} $size={13}>A<SuperCaret $down /></SegBtn>
              </Seg>
              <Seg><SegBtn $w={22} $first><GrowClear /></SegBtn></Seg>
            </Row>
            <Row>
              <Seg>
                <SegBtn $w={22} $first>B</SegBtn>
                <SegBtn $w={24} $italic>I</SegBtn>
                <SegBtn $w={24} $under>U</SegBtn>
                <SegBtn $w={24} $plain $strike $size={13}>abc</SegBtn>
                <SegBtn $w={24} $shadow>S</SegBtn>
                <SegBtn $w={31} $plain>
                  <KerningStack>
                    AV
                    <svg width="14" height="5" viewBox="0 0 14 5"><path d="M0 2.500h14M3 .5L.5 2.500 3 4.500M11 .5l2.500 2L11 4.500" stroke="#7388a8" fill="none" /></svg>
                  </KerningStack>
                  <Caret $off $left={0} />
                </SegBtn>
                <SegBtn $w={30} $plain $size={15}>Aa<Caret $off $left={0} /></SegBtn>
              </Seg>
              <Seg>
                <SegBtn $w={32} $first $plain $size={17}>A<Caret $off $left={3} /></SegBtn>
              </Seg>
            </Row>
          </StackRows>
        </Group>

        <Group w={294} title="Paragraph" launcher>
          <StackRows>
            <Row $gap={3}>
              <Seg>
                <SegBtn $w={33} $first><MiniBullets /><Caret $off $left={1} /></SegBtn>
                <SegBtn $w={32}><MiniBullets numbered /><Caret $off $left={1} /></SegBtn>
              </Seg>
              <Seg>
                <SegBtn $w={21} $first><IndentIcon /></SegBtn>
                <SegBtn $w={21}><IndentIcon right /></SegBtn>
              </Seg>
              <Seg>
                <SegBtn $w={31} $first><LineSpacingIcon /><Caret $off $left={0} /></SegBtn>
              </Seg>
            </Row>
            <Row $gap={3}>
              <Seg>
                <SegBtn $w={23} $first><AlignIcon mode="left" /></SegBtn>
                <SegBtn $w={23}><AlignIcon mode="center" /></SegBtn>
                <SegBtn $w={23}><AlignIcon mode="right" /></SegBtn>
                <SegBtn $w={22}><AlignIcon mode="justify" /></SegBtn>
              </Seg>
              <Seg>
                <SegBtn $w={30} $first><ColumnsIcon /><Caret $off $left={2} /></SegBtn>
              </Seg>
            </Row>
          </StackRows>
          <SmallList>
            <SmallItem icon={<TextDirectionIcon />} label="Text Direction" off caret />
            <SmallItem icon={<AlignTextIcon />} label="Align Text" off caret />
            <SmallItem icon={<SmartArtIcon />} label="Convert to SmartArt" off caret />
          </SmallList>
        </Group>

        <Group w={347} title="Drawing" launcher left={4} gap={2}>
          <Gallery>
            <ShapeGrid>
              {SHAPE_CELLS.map((cell) => (
                <Sv key={cell.key} width="20" height="20" viewBox="0 0 20 20">{cell}</Sv>
              ))}
            </ShapeGrid>
            <GalleryScroll>
              <GalleryBtn $light><Tri $up $c="#a9bcd6" /></GalleryBtn>
              <GalleryBtn><Tri /></GalleryBtn>
              <GalleryBtn><GalleryMark /><Tri /></GalleryBtn>
            </GalleryScroll>
          </Gallery>
          <LargeBtn $w={48}>
            <LargeIconSlot><ArrangeIcon /></LargeIconSlot>
            Arrange
            <CaretLine><Caret $left={0} /></CaretLine>
          </LargeBtn>
          <LargeBtn $w={41} $off>
            <LargeIconSlot><QuickStylesIcon /></LargeIconSlot>
            Quick
            <CaretLine>Styles<Caret $off $left={3} /></CaretLine>
          </LargeBtn>
          <SmallList>
            <SmallItem icon={<ShapeFillIcon />} label="Shape Fill" off caret />
            <SmallItem icon={<ShapeOutlineIcon />} label="Shape Outline" off caret />
            <SmallItem icon={<ShapeEffectsIcon />} label="Shape Effects" off caret />
          </SmallList>
        </Group>

        <Group w={84} title="Editing" left={6}>
          <SmallList>
            <SmallItem icon={<FindIcon />} label="Find" />
            <SmallItem icon={<ReplaceIcon />} label="Replace" caret />
            <SmallItem icon={<SelectIcon />} label="Select" caret />
          </SmallList>
        </Group>
        <RibbonFill />
      </Ribbon>

      <Work>
        <Panel>
          <PanelTabs>
            <PaneTab $active $w={50} $left={0} $pad={8}>Slides</PaneTab>
            <PaneTab $w={64} $left={8} $pad={8}>Outline</PaneTab>
            <PaneClose width="9" height="8" viewBox="0 0 9 8">
              <path d="M1 .5l7 7M8 .5l-7 7" stroke="#3f5a8c" strokeWidth="2" />
            </PaneClose>
          </PanelTabs>
          <PanelBody>
            <Swoosh $d="M0 0H197V44C130 62 50 100 0 136Z" />
            <ThumbList $top={listTop}>
              {thumbs.map((t) => (
                <ThumbRow key={t.n} $active={t.active}>
                  <ThumbNum>{t.n}</ThumbNum>
                  <Thumb>
                    <ThumbFrame />
                    <ThumbHeader>{t.title}</ThumbHeader>
                    <ThumbContent $left={t.left} $top={t.top}>{t.content}</ThumbContent>
                    {t.sound && <SpeakerIcon />}
                    {t.action && <ActionBtn $x={135} $y={96} $s={12}><PlayGlyph s={12} /></ActionBtn>}
                  </Thumb>
                </ThumbRow>
              ))}
            </ThumbList>
            <VScroll $w={15}>
              <ScrollArrow $up />
            </VScroll>
          </PanelBody>
        </Panel>
        <Splitter />
        <Stage>
          <Swoosh $d="M0 0H250C160 15 80 35 0 56Z" />
          {children}
        </Stage>
        <VScroll $w={15}>
          <ScrollArrow $up />
          <ScrollThumb><ThumbGrip /><ThumbGrip /><ThumbGrip /></ScrollThumb>
          <ScrollArrow />
        </VScroll>
        <Edge />
      </Work>
    </Win>
  </Clip>
);

const App = () => (
  <Screen>
    <GlobalStyle />
    <PowerPointWindow height={232} thumbs={THUMBS.top} listTop={3}>
      <Slide>
        <SlideFrame />
        <SlideHeader>Use cases</SlideHeader>
      </Slide>
    </PowerPointWindow>
    <PowerPointWindow height={536} clipboardOn redoOn thumbs={THUMBS.bottom} listTop={4}>
      <Slide>
        <SlideFrame />
        <SlideHeader>Use cases</SlideHeader>
        <Figure><UmlDiagram width={368} soft={0.3} /></Figure>
        <ActionBtn $x={528} $y={359} $s={39}><PlayGlyph s={39} /></ActionBtn>
      </Slide>
    </PowerPointWindow>
  </Screen>
);

export default App;
